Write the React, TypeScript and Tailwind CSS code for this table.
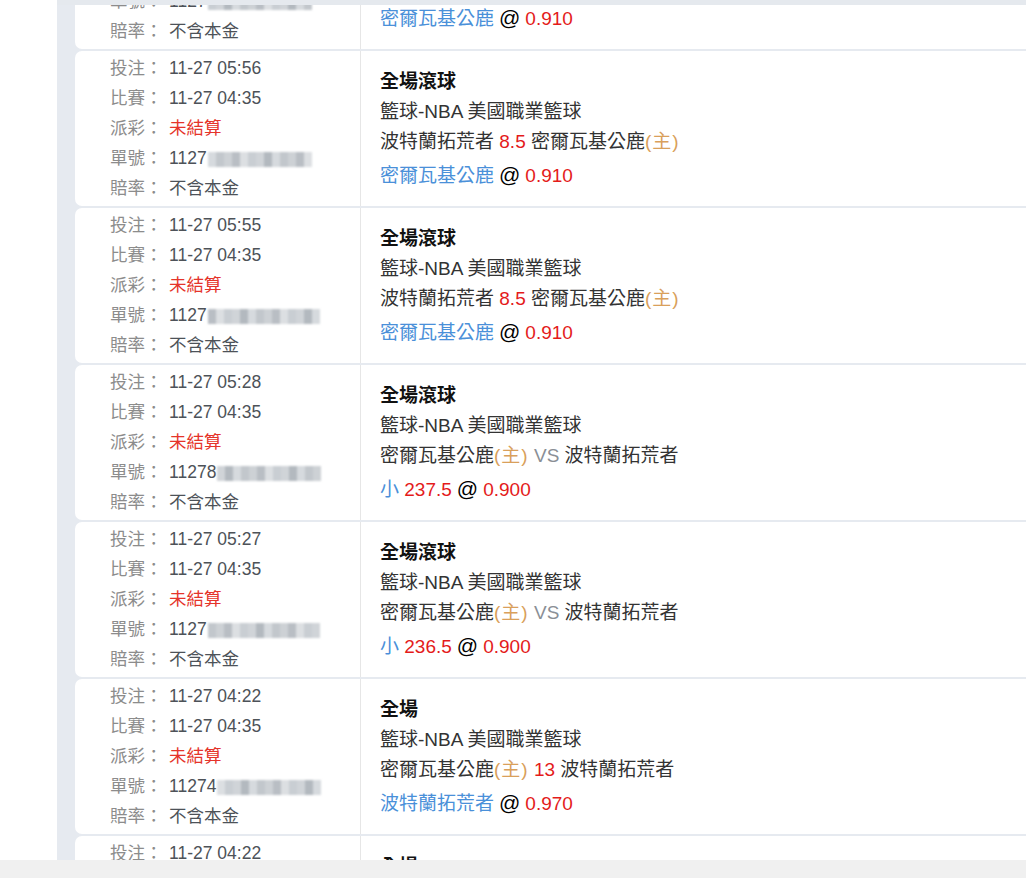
import React from "react";

type Bet = {
  placed: string;
  title: string;
  line3: React.ReactNode;
  line4: React.ReactNode;
  mosaic: number;
  prefix: string;
};

const tiles = [
  "bg-[#c9ced3]",
  "bg-[#d6dade]",
  "bg-[#b9bec4]",
  "bg-[#d0d4d8]",
  "bg-[#c2c7cc]",
  "bg-[#dcdfe2]",
  "bg-[#b3b9bf]",
  "bg-[#cdd1d5]",
];

function Mosaic({ width, seed }: { width: number; seed: number }) {
  const count = Math.floor(width / 8);
  return (
    <span className="inline-flex h-[15px] align-middle blur-[1px] ml-[1px]">
      {Array.from({ length: count }).map((_, i) => (
        <span key={i} className={`w-[8px] h-full ${tiles[(i * 3 + seed) % tiles.length]}`} />
      ))}
    </span>
  );
}

const Home = () => <span className="text-[#d9a05b] tracking-[1px]">(主)</span>;
const Red = ({ children }: { children: React.ReactNode }) => (
  <span className="text-[#e41b1b]">{children}</span>
);
const Blue = ({ children }: { children: React.ReactNode }) => (
  <span className="text-[#4a90d9]">{children}</span>
);
const At = () => <span className="text-black text-[21px] mx-[5px]">@</span>;

const spread = (
  <>
    波特蘭拓荒者 <Red>8.5</Red> 密爾瓦基公鹿<Home />
  </>
);
const spreadPick = (
  <>
    <Blue>密爾瓦基公鹿</Blue>
    <At />
    <Red>0.910</Red>
  </>
);
const vs = (
  <>
    密爾瓦基公鹿<Home /> <span className="text-[#8a8f96]">VS</span> 波特蘭拓荒者
  </>
);
const total = (
  <>
    密爾瓦基公鹿<Home /> <Red>13</Red> 波特蘭拓荒者
  </>
);
const totalPick = (
  <>
    <Blue>波特蘭拓荒者</Blue>
    <At />
    <Red>0.970</Red>
  </>
);

const bets: Bet[] = [
  { placed: "05:58", title: "全場滾球", line3: spread, line4: spreadPick, mosaic: 104, prefix: "1127" },
  { placed: "05:56", title: "全場滾球", line3: spread, line4: spreadPick, mosaic: 104, prefix: "1127" },
  { placed: "05:55", title: "全場滾球", line3: spread, line4: spreadPick, mosaic: 112, prefix: "1127" },
  {
    placed: "05:28",
    title: "全場滾球",
    line3: vs,
    line4: (
      <>
        <Blue>小</Blue> <Red>237.5</Red>
        <At />
        <Red>0.900</Red>
      </>
    ),
    mosaic: 104,
    prefix: "11278",
  },
  {
    placed: "05:27",
    title: "全場滾球",
    line3: vs,
    line4: (
      <>
        <Blue>小</Blue> <Red>236.5</Red>
        <At />
        <Red>0.900</Red>
      </>
    ),
    mosaic: 112,
    prefix: "1127",
  },
  { placed: "04:22", title: "全場", line3: total, line4: totalPick, mosaic: 104, prefix: "11274" },
  { placed: "04:22", title: "全場", line3: total, line4: totalPick, mosaic: 104, prefix: "1127" },
];

function Row({ label, children }: { label: string; children: React.ReactNode }) {
  return (
    <div className="flex items-center h-[30px]">
      <span className="text-[#8c8c8c] w-[59px] shrink-0">{label}：</span>
      <span className="text-[#4d5258]">{children}</span>
    </div>
  );
}

function BetCard({ bet, seed }: { bet: Bet; seed: number }) {
  return (
    <div className="flex bg-white rounded-l-[7px] h-[155px] shrink-0">
      {/* 注單資訊 */}
      <div className="w-[285px] shrink-0 pl-[35px] flex flex-col justify-center text-[17.5px]">
        <Row label="投注">11-27 {bet.placed}</Row>
        <Row label="比賽">11-27 04:35</Row>
        <Row label="派彩">
          <span className="text-[#e5342a]">未結算</span>
        </Row>
        <Row label="單號">
          {bet.prefix}
          <Mosaic width={bet.mosaic} seed={seed} />
        </Row>
        <Row label="賠率">不含本金</Row>
      </div>

      {/* 投注內容 */}
      <div className="flex-1 border-l border-[#e6e6e6] pl-[19px] flex flex-col justify-center text-[19px] text-[#333]">
        <div className="h-[30px] leading-[30px] font-bold text-[#111]">{bet.title}</div>
        <div className="h-[30px] leading-[30px]">籃球-NBA 美國職業籃球</div>
        <div className="h-[30px] leading-[30px]">{bet.line3}</div>
        <div className="h-[30px] leading-[30px] mt-[3px]">{bet.line4}</div>
      </div>
    </div>
  );
}

export default function App() {
  return (
    <div
      className="relative w-[1026px] h-[878px] overflow-hidden bg-white"
      style={{ fontFamily: '"Liberation Sans", Arial, "Noto Sans CJK TC", sans-serif' }}
    >
      <div className="ml-[57px] h-full bg-[#e6eaf0] pl-[18px] flex flex-col overflow-hidden">
        <div className="flex flex-col gap-[2px] -mt-[106px]">
          {bets.map((b, i) => (
            <BetCard key={i} bet={b} seed={i} />
          ))}
        </div>
      </div>

      {/* 頂部 / 底部 */}
      <div className="absolute top-0 left-[57px] right-0 h-[5px] bg-[#e5e9ee]" />
      <div className="absolute bottom-0 left-0 right-0 h-[18px] bg-[#f0f0f0]" />
    </div>
  );
}
